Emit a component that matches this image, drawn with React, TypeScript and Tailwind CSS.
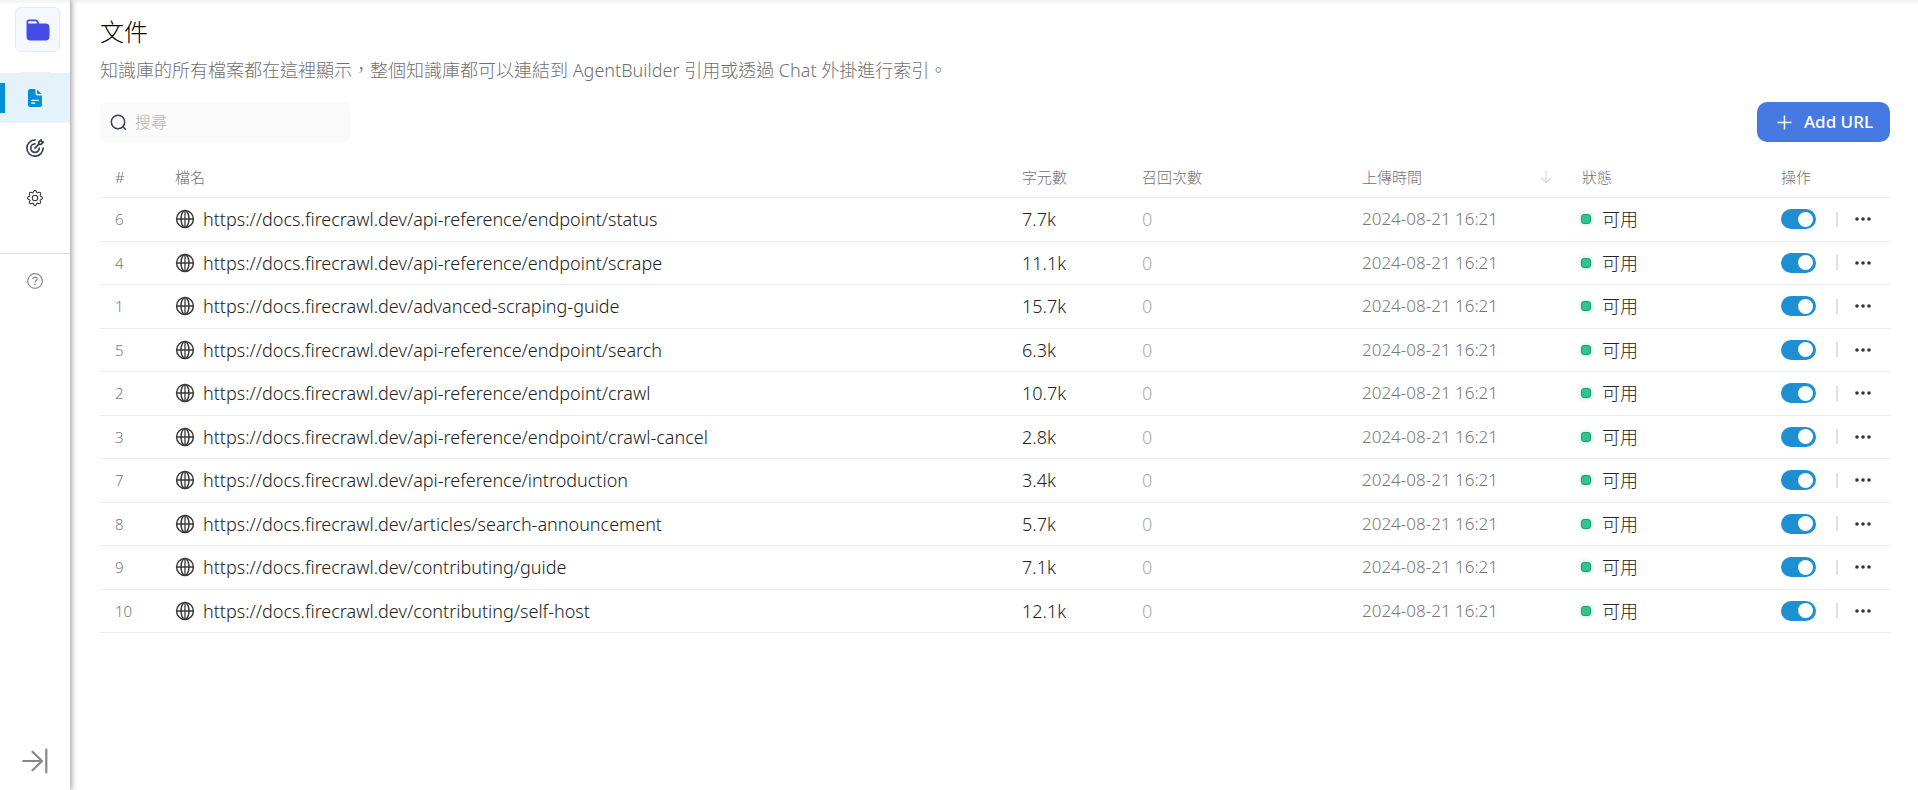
import type { ReactNode } from "react";

type FileRow = { id: number; url: string; chars: string };

const files: FileRow[] = [
  { id: 6, url: "https://docs.firecrawl.dev/api-reference/endpoint/status", chars: "7.7k" },
  { id: 4, url: "https://docs.firecrawl.dev/api-reference/endpoint/scrape", chars: "11.1k" },
  { id: 1, url: "https://docs.firecrawl.dev/advanced-scraping-guide", chars: "15.7k" },
  { id: 5, url: "https://docs.firecrawl.dev/api-reference/endpoint/search", chars: "6.3k" },
  { id: 2, url: "https://docs.firecrawl.dev/api-reference/endpoint/crawl", chars: "10.7k" },
  { id: 3, url: "https://docs.firecrawl.dev/api-reference/endpoint/crawl-cancel", chars: "2.8k" },
  { id: 7, url: "https://docs.firecrawl.dev/api-reference/introduction", chars: "3.4k" },
  { id: 8, url: "https://docs.firecrawl.dev/articles/search-announcement", chars: "5.7k" },
  { id: 9, url: "https://docs.firecrawl.dev/contributing/guide", chars: "7.1k" },
  { id: 10, url: "https://docs.firecrawl.dev/contributing/self-host", chars: "12.1k" },
];

function FolderIcon() {
  return (
    <svg width="24" height="22" viewBox="0 0 24 22" aria-hidden="true">
      <path
        fill="#444ce7"
        fillRule="evenodd"
        d="M3 .5h6.5c1.3 0 2.400.700 2.900 1.900L13.200 4.500H19.500A4 4 0 0 1 23.500 8.500V17.500A4 4 0 0 1 19.500 21.500H4.500A4 4 0 0 1 .500 17.500V3A2.500 2.500 0 0 1 3 .5ZM3 2.300a.8.8 0 0 0-.8.8v1.400h8.900l-.5-1.300c-.2-.6-.6-.9-1.200-.9Z"
      />
    </svg>
  );
}

function DocumentIcon() {
  return (
    <svg width="14" height="18" viewBox="0 0 14 18" aria-hidden="true">
      <path fill="#0090da" d="M2 0h5.500v4.500A2 2 0 0 0 9.500 6.500H14V16a2 2 0 0 1-2 2H2a2 2 0 0 1-2-2V2A2 2 0 0 1 2 0Z" />
      <path fill="#0090da" d="M9 .4 13.600 5H10a1 1 0 0 1-1-1Z" />
      <path stroke="#fff" strokeWidth="1.300" strokeLinecap="round" d="M3.700 11.300h6.600M3.700 14.100h3" />
    </svg>
  );
}

function GoalIcon() {
  return (
    <svg width="18" height="18" viewBox="0 0 18 18" fill="none" stroke="#344054" strokeWidth="1.700" strokeLinecap="round" strokeLinejoin="round" aria-hidden="true">
      <path d="M9.200 1A8.100 8.100 0 1 0 17.100 9.100" />
      <path d="M9 4.800A4.300 4.300 0 1 0 13.300 9.100" />
      <path d="M9 9.100 12.700 5.400" />
      <path d="M12.700 5.400V3.100L15 .9l.5 1.700 1.700.5-2.200 2.300Z" />
    </svg>
  );
}

function GearIcon() {
  return (
    <svg width="16" height="16" viewBox="0 0 16 16" fill="#333" aria-hidden="true">
      <path d="M8 4.754a3.246 3.246 0 1 0 0 6.492 3.246 3.246 0 0 0 0-6.492M5.754 8a2.246 2.246 0 1 1 4.492 0 2.246 2.246 0 0 1-4.492 0" />
      <path d="M9.796 1.343c-.527-1.790-3.065-1.790-3.592 0l-.094.319a.873.873 0 0 1-1.255.520l-.292-.160c-1.640-.892-3.433.902-2.540 2.541l.159.292a.873.873 0 0 1-.520 1.255l-.319.094c-1.790.527-1.790 3.065 0 3.592l.319.094a.873.873 0 0 1 .520 1.255l-.160.292c-.892 1.640.901 3.434 2.541 2.540l.292-.159a.873.873 0 0 1 1.255.520l.094.319c.527 1.790 3.065 1.790 3.592 0l.094-.319a.873.873 0 0 1 1.255-.520l.292.160c1.640.893 3.434-.902 2.540-2.541l-.159-.292a.873.873 0 0 1 .520-1.255l.319-.094c1.790-.527 1.790-3.065 0-3.592l-.319-.094a.873.873 0 0 1-.520-1.255l.160-.292c.893-1.640-.902-3.433-2.541-2.540l-.292.159a.873.873 0 0 1-1.255-.520zm-2.633.283c.246-.835 1.428-.835 1.674 0l.094.319a1.873 1.873 0 0 0 2.693 1.115l.291-.160c.764-.415 1.600.420 1.184 1.185l-.159.292a1.873 1.873 0 0 0 1.116 2.692l.318.094c.835.246.835 1.428 0 1.674l-.319.094a1.873 1.873 0 0 0-1.115 2.693l.160.291c.415.764-.420 1.600-1.185 1.184l-.291-.159a1.873 1.873 0 0 0-2.693 1.116l-.094.318c-.246.835-1.428.835-1.674 0l-.094-.319a1.873 1.873 0 0 0-2.692-1.115l-.292.160c-.764.415-1.600-.420-1.184-1.185l.159-.291A1.873 1.873 0 0 0 1.945 8.930l-.319-.094c-.835-.246-.835-1.428 0-1.674l.319-.094A1.873 1.873 0 0 0 3.060 4.377l-.160-.292c-.415-.764.420-1.600 1.185-1.184l.292.159a1.873 1.873 0 0 0 2.692-1.115z" />
    </svg>
  );
}

function HelpIcon() {
  return (
    <svg width="16" height="16" viewBox="0 0 16 16" fill="none" stroke="#888" strokeWidth="1.200" aria-hidden="true">
      <circle cx="8" cy="8" r="7.300" />
      <path d="M5.800 6.200C5.800 4.900 6.800 4.100 8 4.100s2.200.8 2.200 1.900c0 1.500-2.200 1.700-2.200 3.500" />
      <circle cx="8" cy="11.500" r=".8" fill="#888" stroke="none" />
    </svg>
  );
}

function ExpandIcon() {
  return (
    <svg width="26" height="26" viewBox="0 0 26 26" fill="none" stroke="#888" strokeWidth="2.200" strokeLinecap="round" strokeLinejoin="round" aria-hidden="true">
      <path d="M1.200 13H19M10.500 3.700 20 13l-9.500 9.300M24.300 1.500v23" />
    </svg>
  );
}

function GlobeIcon() {
  return (
    <svg width="20" height="20" viewBox="0 0 20 20" fill="none" stroke="#3a3a3a" strokeWidth="1.500" aria-hidden="true">
      <circle cx="10" cy="10" r="8.400" />
      <ellipse cx="10" cy="10" rx="4" ry="8.400" />
      <path d="M10 1.600v16.800M1.600 10h16.800" strokeWidth="1.300" />
    </svg>
  );
}

function NavItem({ label, active = false, children }: { label: string; active?: boolean; children: ReactNode }) {
  return (
    <a
      href="#"
      aria-label={label}
      aria-current={active ? "page" : undefined}
      className={
        active
          ? "relative flex h-[50px] items-center justify-center bg-[#e4f2fa] before:absolute before:left-0 before:h-[30px] before:w-[5px] before:bg-[#0090da]"
          : "flex h-[50px] items-center justify-center"
      }
    >
      {children}
    </a>
  );
}

function Sidebar() {
  return (
    <nav className="z-10 flex w-[70px] shrink-0 flex-col bg-[linear-gradient(#f2f2f2,#fff_5px)] shadow-[1px_0_6px_rgba(0,0,0,0.45)]">
      <div className="flex h-[73px] flex-col pt-[7px]">
        <a href="#" aria-label="知識庫" className="ml-[15px] flex h-[45px] w-[45px] items-center justify-center rounded-md border border-[#e0eaff] bg-[#f5f8ff]">
          <FolderIcon />
        </a>
        <div className="mt-auto ml-5 h-px w-[30px] bg-[#f0f0f0]" />
      </div>
      <NavItem label="文件" active>
        <DocumentIcon />
      </NavItem>
      <NavItem label="召回測試">
        <GoalIcon />
      </NavItem>
      <NavItem label="設定">
        <GearIcon />
      </NavItem>
      <div className="mt-[30px] border-t border-[#ddd]">
        <a href="#" aria-label="說明" className="flex h-[54px] items-center justify-center">
          <HelpIcon />
        </a>
      </div>
      <button type="button" aria-label="展開側欄" className="mt-auto mb-4 flex justify-center">
        <ExpandIcon />
      </button>
    </nav>
  );
}

function FileTableRow({ file }: { file: FileRow }) {
  return (
    <tr className="border-b border-[#ebebeb] text-lg leading-6 text-[#222] odd:h-[44px] even:h-[43px]">
      <td className="pl-[15px] text-[15px] text-[#777]">{file.id}</td>
      <td className="pl-[15px]">
        <div className="flex items-center gap-2">
          <GlobeIcon />
          <span>{file.url}</span>
        </div>
      </td>
      <td className="pl-[15px]">{file.chars}</td>
      <td className="pl-[15px] text-[#aaa]">0</td>
      <td className="pl-[15px] text-[17px] text-[#777]">2024-08-21 16:21</td>
      <td className="pl-[14px]">
        <div className="flex items-center gap-[11px]">
          <span className="h-[10px] w-[10px] rounded-[3px] border border-[#17a06c] bg-[#31c48d] shadow-[0_0_5px_rgba(49,196,141,0.4)]" />
          可用
        </div>
      </td>
      <td className="pl-[14px]">
        <div className="flex items-center">
          <input
            type="checkbox"
            role="switch"
            defaultChecked
            aria-label={`啟用 ${file.url}`}
            className="flex h-5 w-[35px] appearance-none items-center rounded-full bg-[#ccc] px-[3px] before:h-[15px] before:w-[15px] before:rounded-full before:bg-white checked:justify-end checked:bg-[#1e8fd3]"
          />
          <span className="ml-5 h-[15px] w-[2px] bg-[#e0e0e0]" />
          <button type="button" aria-label="更多" className="ml-[17px]">
            <svg width="16" height="4" viewBox="0 0 16 4" fill="#333" aria-hidden="true">
              <circle cx="2" cy="2" r="1.800" />
              <circle cx="8" cy="2" r="1.800" />
              <circle cx="14" cy="2" r="1.800" />
            </svg>
          </button>
        </div>
      </td>
    </tr>
  );
}

export default function App() {
  return (
    <div className="flex min-h-screen bg-white font-['Noto_Sans','Noto_Sans_CJK_TC',sans-serif] font-light">
      <Sidebar />
      <main className="min-w-0 flex-1 bg-[linear-gradient(#f2f2f2,#fff_5px)] pt-4 pr-7 pl-[30px]">
        <h1 className="text-2xl leading-8 text-black">文件</h1>
        <p className="mt-2 text-lg leading-7 text-[#707070]">
          知識庫的所有檔案都在這裡顯示，整個知識庫都可以連結到 AgentBuilder 引用或透過 Chat 外掛進行索引。
        </p>
        <div className="mt-[18px] flex items-center justify-between">
          <label className="flex h-10 w-[250px] items-center gap-2 rounded-md bg-[#fafafa] pl-[10px]">
            <svg width="17" height="17" viewBox="0 0 17 17" fill="none" stroke="#344054" strokeWidth="1.500" strokeLinecap="round" aria-hidden="true">
              <circle cx="8" cy="8" r="6.700" />
              <path d="m13 13 2.500 2.300" />
            </svg>
            <input
              type="text"
              aria-label="搜尋"
              placeholder="搜尋"
              className="min-w-0 flex-1 bg-transparent text-base text-[#333] outline-none placeholder:text-[#b4b4b4]"
            />
          </label>
          <button type="button" className="flex h-10 items-center gap-3 rounded-[10px] bg-[#467ae2] pr-[17px] pl-5 text-[17px] font-medium text-white">
            <svg width="15" height="15" viewBox="0 0 15 15" stroke="#fff" strokeWidth="1.500" aria-hidden="true">
              <path d="M7.500 .5v14M.5 7.500h14" />
            </svg>
            Add URL
          </button>
        </div>
        <table className="mt-[15px] w-full table-fixed border-collapse text-left">
          <thead>
            <tr className="h-10 border-b border-[#ebebeb] text-[15px] leading-5 text-[#707070]">
              <th className="w-[60px] pl-[15px] font-light">#</th>
              <th className="pl-[15px] font-light">檔名</th>
              <th className="w-[120px] pl-[15px] font-light">字元數</th>
              <th className="w-[220px] pl-[15px] font-light">召回次數</th>
              <th className="w-[220px] pl-[15px] font-light">
                <div className="flex items-center justify-between pr-[15px]">
                  上傳時間
                  <svg width="12" height="14" viewBox="0 0 12 14" fill="none" stroke="#d9d9d9" strokeWidth="1.200" aria-hidden="true">
                    <path d="M6 1v11.500M.8 7.500 6 12.700l5.200-5.200" />
                  </svg>
                </div>
              </th>
              <th className="w-[200px] pl-[15px] font-light">狀態</th>
              <th className="w-[123px] pl-[14px] font-light">操作</th>
            </tr>
          </thead>
          <tbody>
            {files.map((file) => (
              <FileTableRow key={file.id} file={file} />
            ))}
          </tbody>
        </table>
      </main>
    </div>
  );
}
